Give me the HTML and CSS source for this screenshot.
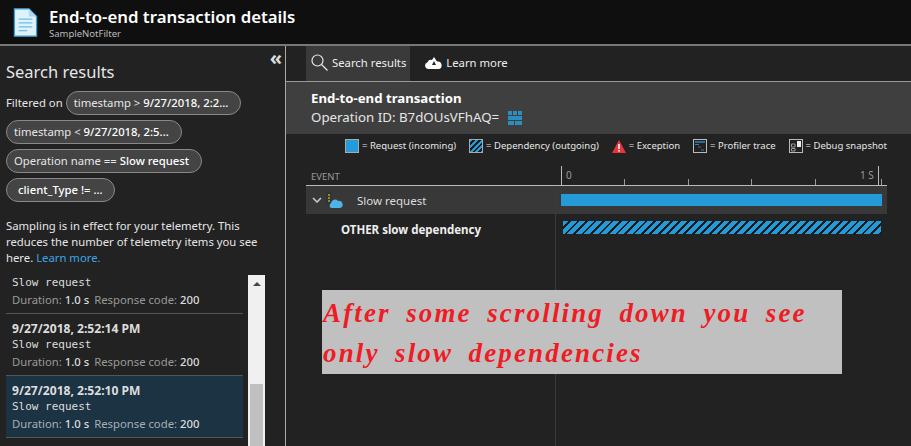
FILE: index.html
```html
<!DOCTYPE html>
<html lang="en">
<head>
    <meta charset="UTF-8">
    <title>End-to-end transaction details</title>
    <link rel="stylesheet" href="styles.css">
</head>
<body>
    <header class="blade-header">
        <svg class="doc-icon" width="25" height="29" viewBox="0 0 28 34">
            <path d="M1 1H18L27 10V33H1Z" fill="#dff1fa" stroke="#3aa0d0" stroke-width="1.5"/>
            <path d="M18 1V10H27Z" fill="#a9d8ef"/>
            <path d="M6 13H22M6 17.500H22M6 22H22M6 26.500H16" stroke="#6cc0e6" stroke-width="1.500"/>
        </svg>
        <div>
            <h1>End-to-end transaction details</h1>
            <div class="subtitle">SampleNotFilter</div>
        </div>
    </header>
    <div class="content">
        <aside class="side">
            <div class="collapse">«</div>
            <h2>Search results</h2>
            <div class="filters">
                <span class="filter-label">Filtered on</span>
                <span class="pill">timestamp &gt; <b>9/27/2018, 2:2...</b></span>
                <span class="pill">timestamp &lt; <b>9/27/2018, 2:5...</b></span>
                <span class="pill">Operation name == <b>Slow request</b></span>
                <span class="pill pill-wide"><b>client_Type != ...</b></span>
            </div>
            <p class="sampling">Sampling is in effect for your telemetry. This reduces the number of telemetry items you see here. <a href="#">Learn more.</a></p>
            <div class="results">
                <div class="result-list">
                    <div class="result first">
                        <div class="mono">Slow request</div>
                        <div class="meta">Duration: <b>1.0 s</b> Response code: <b>200</b></div>
                    </div>
                    <div class="result">
                        <div class="date">9/27/2018, 2:52:14 PM</div>
                        <div class="mono">Slow request</div>
                        <div class="meta">Duration: <b>1.0 s</b> Response code: <b>200</b></div>
                    </div>
                    <div class="result selected">
                        <div class="date">9/27/2018, 2:52:10 PM</div>
                        <div class="mono">Slow request</div>
                        <div class="meta">Duration: <b>1.0 s</b> Response code: <b>200</b></div>
                    </div>
                </div>
                <div class="scrollbar">
                    <div class="scroll-arrow"></div>
                    <div class="scroll-thumb"></div>
                </div>
            </div>
        </aside>
        <main class="detail">
            <nav class="toolbar">
                <div class="tool active">
                    <svg width="17" height="17" viewBox="0 0 17 17" fill="none" stroke="#e6e6e6" stroke-width="1.200"><circle cx="6.500" cy="6.500" r="5.500"/><path d="M10.500 10.500L16.500 16.500"/></svg>
                    Search results
                </div>
                <div class="tool">
                    <svg width="18" height="12" viewBox="0 0 18 12"><path d="M4 12A3.500 3.500 0 0 1 3.500 5.200 4 4 0 0 1 8 3L10 0 13 4.500A3.500 3.500 0 0 1 14.500 12Z" fill="#fff"/><path d="M10 4L8 8H12Z" fill="#222"/></svg>
                    Learn more
                </div>
            </nav>
            <section class="summary">
                <div class="summary-title">End-to-end transaction</div>
                <div class="summary-id">Operation ID: B7dOUsVFhAQ=
                    <svg width="14" height="14" viewBox="0 0 14 14" fill="#2a8fc0"><path d="M0 0H4V4H0ZM5 0H9V4H5ZM10 0H14V4H10ZM0 5H14V9H0ZM0 10H6V14H0ZM7 10H14V14H7Z"/></svg>
                </div>
            </section>
            <div class="legend">
                <span class="legend-item"><i class="swatch"></i>= Request (incoming)</span>
                <span class="legend-item"><i class="swatch hatched"></i>= Dependency (outgoing)</span>
                <span class="legend-item">
                    <svg width="14" height="13" viewBox="0 0 14 13"><path d="M7 0L14 13H0Z" fill="#e8343a"/><path d="M6.200 4H7.800V9H6.200ZM6.200 10H7.800V11.500H6.200Z" fill="#fff"/></svg>
                    = Exception</span>
                <span class="legend-item">
                    <svg width="14" height="14" viewBox="0 0 14 14"><rect x=".5" y=".5" width="13" height="13" fill="#222" stroke="#bbb"/><path d="M2 3H12" stroke="#1e88c8" stroke-width="1.500"/><path d="M2 5.500H6" stroke="#1e88c8"/><path d="M5 8H8" stroke="#d13438"/><path d="M8 11H11" stroke="#1e88c8"/></svg>
                    = Profiler trace</span>
                <span class="legend-item">
                    <svg width="14" height="14" viewBox="0 0 14 14"><rect x=".5" y=".5" width="13" height="13" fill="#222" stroke="#bbb"/><path d="M8 2H12V8H8Z" fill="#eee"/><path d="M2.500 5H6V8H2.500ZM2.500 9.500H6V12H2.500Z" fill="none" stroke="#999"/></svg>
                    = Debug snapshot</span>
            </div>
            <section class="timeline">
                <div class="axis">
                    <div class="axis-name">EVENT</div>
                    <div class="axis-scale">
                        <span class="tick tall"><em>0</em></span>
                        <span class="tick"></span>
                        <span class="tick"></span>
                        <span class="tick"></span>
                        <span class="tick"></span>
                        <span class="tick tall last"><em class="left">1 S</em></span>
                    </div>
                </div>
                <div class="row row-request">
                    <div class="row-name">
                        <svg class="chevron" width="10" height="6" viewBox="0 0 10 6" fill="none" stroke="#ccc" stroke-width="1.500"><path d="M1 1L5 5L9 1"/></svg>
                        <svg width="17" height="17" viewBox="0 0 17 17"><path d="M0 0H6V13H0Z" fill="#333"/><path d="M2 3H4M2 6H4M2 9H4" stroke="#e3e04a"/><path d="M5 16A3 3 0 0 1 5 11 4 4 0 0 1 12 9 3.500 3.500 0 0 1 14 16Z" fill="#4fb3e8"/></svg>
                        <span class="row-label">Slow request</span>
                    </div>
                    <div class="bar-cell"><div class="bar"></div></div>
                </div>
                <div class="row row-dep">
                    <div class="row-name dep-name">OTHER slow dependency</div>
                    <div class="bar-cell"><div class="bar bar-hatched"></div></div>
                </div>
                <div class="divider"></div>
            </section>
            <div class="note">After some scrolling down you see only slow dependencies</div>
        </main>
    </div>
</body>
</html>
```
FILE: styles.css
```css
html, body {
    margin: 0;
    padding: 0;
    height: 446px;
    overflow: hidden;
}
body {
    background-color: #222;
    color: #e6e6e6;
    font-family: "Noto Sans", "Open Sans", sans-serif;
    font-size: 11.300px;
}
.blade-header {
    display: flex;
    align-items: center;
    gap: 11px;
    height: 46px;
    box-sizing: border-box;
    padding-left: 13px;
    background-color: #0f0f0f;
    border-bottom: 2px solid #777;
}
h1 {
    margin: 0;
    font-size: 16.800px;
    line-height: 22px;
    font-weight: 600;
    color: #fff;
}
.subtitle {
    font-size: 9.500px;
    line-height: 11px;
    color: #bbb;
}
.content {
    display: flex;
    height: 400px;
}
.side {
    position: relative;
    width: 286px;
    flex: none;
    box-sizing: border-box;
    padding: 0 0 0 6px;
    border-right: 1px solid #aaa;
}
.collapse {
    position: absolute;
    top: 0;
    right: 3px;
    font-size: 20px;
    line-height: 24px;
    font-weight: 700;
    color: #ddd;
}
h2 {
    margin: 13px 0 0;
    font-size: 16.500px;
    line-height: 25px;
    font-weight: 400;
}
.filters {
    display: flex;
    flex-wrap: wrap;
    gap: 5px 3px;
    width: 245px;
    margin-top: 7px;
}
.filter-label {
    line-height: 24px;
}
.pill {
    height: 24px;
    box-sizing: border-box;
    padding: 0 12px 0 7px;
    border: 1px solid #888;
    border-radius: 12px;
    background-color: #444;
    line-height: 22px;
    white-space: nowrap;
}
.pill b {
    font-weight: 500;
    color: #fff;
}
.pill-wide {
    padding: 0 11px;
}
.sampling {
    width: 265px;
    margin: 16px 0 0;
    line-height: 16px;
}
.sampling a {
    color: #3ca6e4;
    text-decoration: none;
}
.results {
    display: flex;
    margin-top: 9px;
}
.result-list {
    width: 237px;
}
.result {
    height: 62px;
    box-sizing: border-box;
    padding: 6px 6px 0;
    border-bottom: 1px solid #555;
}
.result.first {
    height: 39px;
    padding-top: 0;
}
.result.selected {
    background-color: #1c3344;
}
.date {
    font-size: 12.100px;
    line-height: 17px;
    font-weight: 700;
    color: #ddd;
}
.mono {
    font-family: "DejaVu Sans Mono", monospace;
    font-size: 11px;
    line-height: 15px;
    color: #ddd;
}
.meta {
    line-height: 20px;
    color: #999;
    white-space: nowrap;
}
.meta b {
    font-weight: 500;
    color: #ddd;
    margin-right: 2px;
}
.selected .meta {
    color: #a5afb6;
}
.scrollbar {
    width: 17px;
    height: 171px;
    margin-left: 5px;
    background-color: #f0f0f0;
    display: flex;
    flex-direction: column;
    justify-content: space-between;
    align-items: center;
}
.scroll-arrow {
    margin-top: 7px;
    border-left: 4px solid transparent;
    border-right: 4px solid transparent;
    border-bottom: 4px solid #444;
}
.scroll-thumb {
    width: 13px;
    height: 62px;
    background-color: #c0c0c0;
}
.detail {
    position: relative;
    flex: 1;
    min-width: 0;
}
.toolbar {
    display: flex;
    height: 36px;
    box-sizing: border-box;
    padding-left: 20px;
    border-bottom: 1px solid #999;
}
.tool {
    display: flex;
    align-items: center;
    gap: 4px;
    padding: 0 5px 2px;
    color: #eee;
}
.tool.active {
    background-color: #3a3a3a;
    padding-right: 4px;
    margin-right: 9px;
}
.summary {
    height: 52px;
    box-sizing: border-box;
    padding: 8px 0 0 25px;
    background-color: #3f3f3f;
}
.summary-title {
    font-size: 13.200px;
    line-height: 17px;
    font-weight: 700;
    color: #fff;
}
.summary-id {
    display: flex;
    align-items: center;
    gap: 9px;
    margin-top: 1px;
    font-size: 13.300px;
    line-height: 19px;
}
.legend {
    display: flex;
    justify-content: flex-end;
    gap: 13px;
    height: 24px;
    padding-right: 24px;
    box-sizing: border-box;
    font-size: 9.500px;
    line-height: 16px;
}
.legend-item {
    display: flex;
    align-items: center;
    gap: 3px;
    white-space: nowrap;
}
.swatch {
    width: 12px;
    height: 12px;
    background-color: #259ad9;
    border: 1px solid #aaa;
}
.swatch.hatched {
    background: repeating-linear-gradient(135deg, #259ad9 0 2px, #1a1a1a 2px 4px);
}
.timeline {
    position: relative;
    margin: 0 24px 0 20px;
}
.axis {
    display: flex;
    height: 27px;
    border-bottom: 1px solid #bbb;
}
.axis-name {
    width: 255px;
    padding: 12px 0 0 5px;
    box-sizing: border-box;
    font-size: 9.500px;
    line-height: 14px;
    color: #999;
}
.axis-scale {
    flex: 1;
    display: flex;
    justify-content: space-between;
    align-items: flex-end;
    padding-right: 8px;
}
.tick {
    position: relative;
    width: 1px;
    height: 6px;
    background-color: #999;
}
.tick.tall {
    height: 19px;
    background-color: #bbb;
}
.tick.last::after {
    content: "";
    position: absolute;
    left: 3px;
    bottom: 0;
    width: 1px;
    height: 6px;
    background-color: #999;
}
.tick em {
    position: absolute;
    top: 2px;
    left: 5px;
    font-style: normal;
    font-size: 10px;
    line-height: 14px;
    color: #999;
    white-space: nowrap;
}
.tick em.left {
    left: -18px;
}
.row {
    display: flex;
}
.row-request {
    height: 28px;
    background-color: #383838;
    align-items: center;
}
.row-dep {
    height: 27px;
    align-items: center;
}
.row-name {
    width: 255px;
    flex: none;
    display: flex;
    align-items: center;
    font-size: 11.500px;
    color: #ddd;
}
.chevron {
    margin: 0 4px 0 6px;
}
.row-label {
    margin-left: 14px;
}
.dep-name {
    margin-top: 3px;
    padding-left: 35px;
    box-sizing: border-box;
    font-weight: 700;
    color: #eee;
}
.bar-cell {
    flex: 1;
    padding-right: 5px;
}
.bar {
    height: 12px;
    background-color: #259ad9;
}
.bar-hatched {
    height: 13px;
    margin: 0 1px 0 2px;
    background: repeating-linear-gradient(135deg, #259ad9 0 4px, #1a1a1a 4px 6px);
}
.divider {
    position: absolute;
    top: 28px;
    left: 249px;
    width: 1px;
    height: 260px;
    background-color: #3a3a3a;
}
.note {
    position: absolute;
    left: 36px;
    top: 244px;
    width: 520px;
    height: 84px;
    box-sizing: border-box;
    padding: 3px 0 0 1px;
    background-color: #c0c0c0;
    color: #ee1c25;
    font-family: "Liberation Serif", serif;
    font-style: italic;
    font-weight: 700;
    font-size: 27px;
    line-height: 40px;
    letter-spacing: 2.150px;
    word-spacing: 6.500px;
}
```
